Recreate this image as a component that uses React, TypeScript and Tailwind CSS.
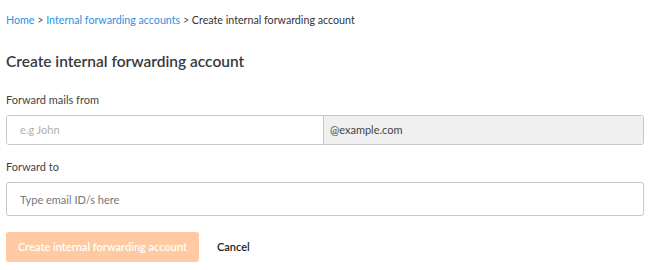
export default function App() {
  return (
    <main
      className="min-h-[270px] bg-white px-[6px] pt-[12px] text-[#333]"
      style={{ fontFamily: "'Segoe UI', Lato, 'Open Sans', sans-serif" }}
    >
      <nav className="text-[10.7px] leading-[16px]">
        <a className="text-[#2c8fe6]">Home</a>
        <span className="text-[#555]"> &gt; </span>
        <a className="text-[#2c8fe6]">Internal forwarding accounts</a>
        <span className="text-[#555]"> &gt; </span>
        <span className="text-[#333]">Create internal forwarding account</span>
      </nav>

      <h1 className="mt-[23px] text-[15.5px] font-semibold leading-[20px] text-[#3a3a3a]">
        Create internal forwarding account
      </h1>

      <div className="mt-[21px]">
        <label className="block text-[11px] leading-[16px] text-[#444]">Forward mails from</label>
        <div className="mt-[7px] flex h-[30px] w-[638px] overflow-hidden rounded-[3px] border border-[#c8c8c8]">
          <input
            placeholder="e.g John"
            className="w-[317px] border-r border-[#c8c8c8] bg-white px-[13px] text-[11px] outline-none placeholder:text-[#b0b0b0]"
          />
          <div className="flex flex-1 items-center bg-[#f0f0f0] px-[6px] text-[11px] text-[#444]">
            @example.com
          </div>
        </div>
      </div>

      <div className="mt-[14px]">
        <label className="block text-[11px] leading-[16px] text-[#444]">Forward to</label>
        <input
          placeholder="Type email ID/s here"
          className="mt-[7px] block h-[34px] w-[638px] rounded-[3px] border border-[#c8c8c8] px-[13px] text-[11px] outline-none placeholder:text-[#777]"
        />
      </div>

      <div className="mt-[16px] flex items-center gap-[18px]">
        <button
          disabled
          className="h-[30px] w-[193px] rounded-[3px] bg-[#ffc9a1] text-[11px] font-semibold text-white"
        >
          Create internal forwarding account
        </button>
        <button className="text-[11px] font-semibold text-[#222]">Cancel</button>
      </div>
    </main>
  );
}
